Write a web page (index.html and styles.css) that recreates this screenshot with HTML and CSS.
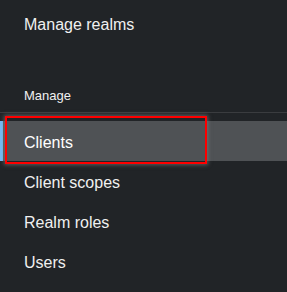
FILE: index.html
```html
<!DOCTYPE html>
<html lang="en">
<head>
  <meta charset="UTF-8" />
  <meta name="viewport" content="width=device-width, initial-scale=1.0"/>
  <title>Realm navigation</title>
  <link rel="stylesheet" href="styles.css">
</head>
<body>

  <nav class="sidebar">
    <a class="nav-link realm-link" href="#">Manage realms</a>

    <!-- Manage group -->
    <section class="nav-group">
      <h2 class="group-title">Manage</h2>
      <ul class="nav-list">
        <li><a class="nav-link current" href="#">Clients<span class="highlight"></span></a></li>
        <li><a class="nav-link" href="#">Client scopes</a></li>
        <li><a class="nav-link" href="#">Realm roles</a></li>
        <li><a class="nav-link" href="#">Users</a></li>
      </ul>
    </section>
  </nav>

</body>
</html>
```

FILE: styles.css
```css
body {
  font-family: 'Liberation Sans', Arial, sans-serif;
  margin: 0;
  padding: 0;
  background-color: #212427;
  color: #f0f0f0;
  width: 287px;
  height: 292px;
  overflow: hidden;
}

.sidebar {
  padding-top: 3px;
}

.nav-link {
  position: relative;
  display: flex;
  align-items: center;
  box-sizing: border-box;
  height: 40px;
  padding: 3px 0 0 24px;
  font-size: 16px;
  color: #f0f0f0;
  text-decoration: none;
}

/* Manage group */
.nav-group {
  margin-top: 44px;
}

.group-title {
  margin: 0 0 9px 24px;
  padding-top: 1px;
  font-size: 13px;
  font-weight: normal;
  color: #f0f0f0;
}

.nav-list {
  list-style: none;
  margin: 0;
  padding: 8px 0 0;
  border-top: 1px solid #3a3c3f;
}

.nav-link.current {
  background-color: #4f5255;
  color: #ffffff;
}

.nav-link.current::before {
  content: "";
  position: absolute;
  left: 0;
  top: 0;
  bottom: 0;
  width: 3px;
  background-color: #73bcf7;
}

/* red annotation box */
.highlight {
  position: absolute;
  left: 5px;
  top: -5px;
  width: 202px;
  height: 48px;
  box-sizing: border-box;
  border: 2px solid #f00;
  box-shadow: 0 0 4px 1px rgba(130, 130, 130, 0.6);
}
```
